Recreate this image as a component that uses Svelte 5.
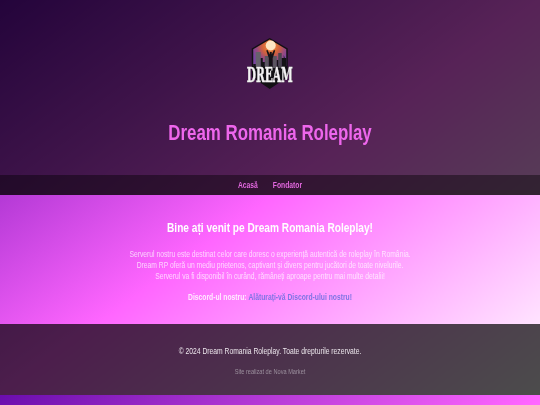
<script>
  const links = ['Acasă', 'Fondator'];
  const paragraphs = [
    'Serverul nostru este destinat celor care doresc o experiență autentică de roleplay în România.',
    'Dream RP oferă un mediu prietenos, captivant și divers pentru jucători de toate nivelurile.',
    'Serverul va fi disponibil în curând, rămâneți aproape pentru mai multe detalii!'
  ];
</script>

<div class="stage">
  <header>
    <svg class="logo" viewBox="-2 0 52 56" preserveAspectRatio="none" aria-hidden="true">
      <defs>
        <radialGradient id="sky" gradientUnits="userSpaceOnUse" cx="25" cy="10" r="19">
          <stop offset="0" stop-color="#f79a3c" />
          <stop offset="0.45" stop-color="#d2623c" />
          <stop offset="0.75" stop-color="#9a4a7e" />
          <stop offset="1" stop-color="#7a44a0" />
        </radialGradient>
      </defs>
      <path d="M24 2 L42 12.5 V41 L24 53 L6 41 V12.5 Z" fill="#121014" />
      <path d="M24 3.5 L40.5 13.2 V30 H7.5 V13.2 Z" fill="url(#sky)" />
      <circle cx="25" cy="9.5" r="5" fill="#fde6c2" />
      <path d="M10 16 H15 V32 H10 Z" fill="#66616c" />
      <path d="M19 20 H23 V32 H19 Z M27 20 H31 V32 H27 Z" fill="#5a5560" />
      <path d="M32.5 17 H36 V32 H32.5 Z" fill="#4a4650" />
      <path d="M7.5 32 V28 H10 V32 Z M15 32 V22 H17 V26 H19 V32 Z M23 32 V22 L20.5 14.5 L21.8 14 L24 18.5 V16 H26 V18.5 L28.2 14 L29.5 14.5 L27 22 V32 Z M31 32 V24 H32.5 V32 Z M36 32 V22 H38 V19 L39 22 H40.5 V32 Z" fill="#141216" />
      <text x="24" y="46" text-anchor="middle" textLength="46" lengthAdjust="spacingAndGlyphs" class="dream">DREAM</text>
    </svg>
    <h1>Dream Romania Roleplay</h1>
  </header>
  <nav>
    {#each links as link}
      <a href="#top">{link}</a>
    {/each}
  </nav>
  <main>
    <h2>Bine ați venit pe Dream Romania Roleplay!</h2>
    <div class="copy">
      {#each paragraphs as p}
        <p>{p}</p>
      {/each}
    </div>
    <p class="discord"><strong>Discord-ul nostru:</strong> <a href="#top">Alăturați-vă Discord-ului nostru!</a></p>
  </main>
  <footer>
    <p class="rights">© 2024 Dream Romania Roleplay. Toate drepturile rezervate.</p>
    <p class="credit">Site realizat de Nova Market</p>
  </footer>
</div>

<style>
  :global(html), :global(body) {
    margin: 0;
    height: 405px;
    overflow: hidden;
    background: #ff66ff;
  }
  /* The reference is a squeezed capture: laid out at 720px wide, shown at 540px. */
  .stage {
    width: 720px;
    height: 405px;
    overflow: hidden;
    transform: scaleX(0.75);
    transform-origin: left top;
    display: flex;
    flex-direction: column;
    text-align: center;
    font-family: "Liberation Sans", Arial, sans-serif;
    color: #fff;
    background: linear-gradient(to bottom right, #6a0dad, #ff66ff, #ffffff) left top / 100% 395px repeat;
  }
  header {
    height: 175px;
    flex: none;
    box-sizing: border-box;
    padding-top: 36px;
    background: rgba(0, 0, 0, 0.66);
  }
  .logo {
    display: block;
    width: 69.33px;
    height: 56px;
    margin: 0 auto;
    overflow: visible;
    filter: blur(0.35px);
  }
  .dream {
    font-family: "DejaVu Serif", "Liberation Serif", serif;
    font-weight: bold;
    font-size: 20px;
    fill: #f4f2f4;
    stroke: #f4f2f4;
    stroke-width: 0.5px;
    filter: drop-shadow(0 0 0.6px #121014);
  }
  h1 {
    margin: 27px 0 0;
    font-size: 22.5px;
    line-height: 27px;
    color: #ee66ec;
    font-weight: bold;
    filter: blur(0.3px);
  }
  nav {
    height: 20px;
    flex: none;
    display: flex;
    justify-content: center;
    align-items: center;
    gap: 20px;
    background: rgba(0, 0, 0, 0.8);
  }
  nav a {
    color: #e468e0;
    font-size: 9px;
    font-weight: bold;
    text-decoration: none;
    filter: blur(0.35px);
  }
  main {
    height: 129px;
    flex: none;
    box-sizing: border-box;
    padding-top: 25px;
  }
  h2 {
    margin: 0 0 13px;
    font-size: 13.5px;
    line-height: 16px;
    font-weight: bold;
    color: #fff;
    filter: blur(0.35px);
  }
  .copy {
    filter: blur(0.4px);
  }
  .copy p {
    margin: 0;
    font-size: 9px;
    line-height: 11px;
    color: rgba(255, 255, 255, 0.72);
  }
  .discord {
    margin: 10px 0 0;
    font-size: 9px;
    line-height: 11px;
    color: rgba(255, 255, 255, 0.85);
    filter: blur(0.35px);
  }
  .discord a {
    color: #7f74e4;
    font-weight: bold;
    text-decoration: none;
  }
  footer {
    height: 71px;
    flex: none;
    box-sizing: border-box;
    padding-top: 22px;
    background: rgba(0, 0, 0, 0.7);
  }
  .rights {
    margin: 0;
    font-size: 9px;
    line-height: 11px;
    color: #ece6ec;
    filter: blur(0.3px);
  }
  .credit {
    margin: 11px 0 0;
    font-size: 7.5px;
    line-height: 8px;
    color: #9a8f9c;
    filter: blur(0.3px);
  }
</style>
